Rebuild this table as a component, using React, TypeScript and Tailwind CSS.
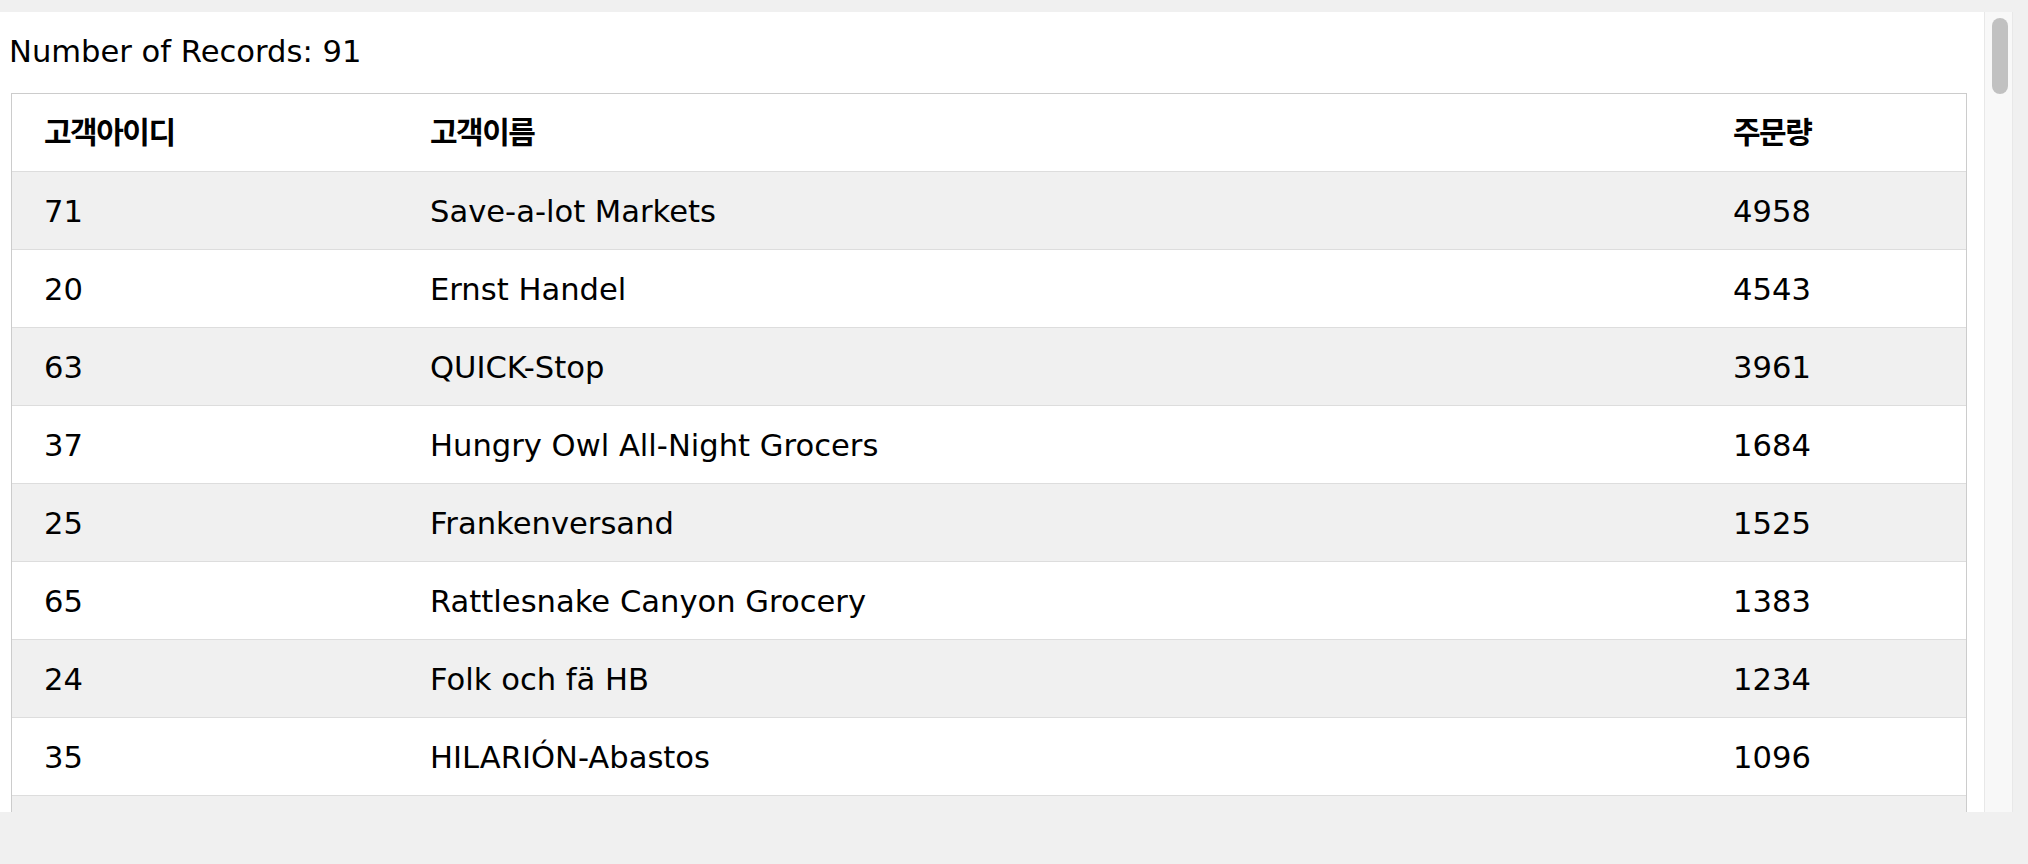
const rows = [
  { id: "71", name: "Save-a-lot Markets", qty: "4958" },
  { id: "20", name: "Ernst Handel", qty: "4543" },
  { id: "63", name: "QUICK-Stop", qty: "3961" },
  { id: "37", name: "Hungry Owl All-Night Grocers", qty: "1684" },
  { id: "25", name: "Frankenversand", qty: "1525" },
  { id: "65", name: "Rattlesnake Canyon Grocery", qty: "1383" },
  { id: "24", name: "Folk och fä HB", qty: "1234" },
  { id: "35", name: "HILARIÓN-Abastos", qty: "1096" },
];

export default function App() {
  return (
    <div
      className="min-h-screen bg-[#f0f0f0] pt-[12px] pr-[15px] text-black"
      style={{ fontFamily: '"DejaVu Sans", "Noto Sans CJK KR", sans-serif' }}
    >
      <div className="flex h-[800px] bg-white">
        {/* Content */}
        <div className="flex-1 overflow-hidden">
          <p className="ml-[9px] mt-[22px] text-[30.6px] leading-[35px]">Number of Records: 91</p>

          <div className="ml-[11px] mr-[17px] mt-[24px] border border-[#cccccc]">
            {/* Header */}
            <div className="grid h-[78px] grid-cols-[386px_1303px_1fr] border-b border-[#dddddd] bg-white">
              <div className="flex items-center pl-[32px] text-[30px] font-bold tracking-[-1.5px]">고객아이디</div>
              <div className="flex items-center pl-[32px] text-[30px] font-bold tracking-[-1.5px]">고객이름</div>
              <div className="flex items-center pl-[32px] text-[30px] font-bold tracking-[-1.5px]">주문량</div>
            </div>

            {rows.map((r, i) => (
              <div
                key={r.id}
                className={
                  i % 2 === 0
                    ? "grid h-[78px] grid-cols-[386px_1303px_1fr] border-b border-[#dddddd] bg-[#f0f0f0]"
                    : "grid h-[78px] grid-cols-[386px_1303px_1fr] border-b border-[#dddddd] bg-white"
                }
              >
                <div className="flex items-center pl-[32px] pt-[2px] text-[30.6px]">{r.id}</div>
                <div className="flex items-center pl-[32px] pt-[2px] text-[30.6px]">{r.name}</div>
                <div className="flex items-center pl-[32px] pt-[2px] text-[30.6px]">{r.qty}</div>
              </div>
            ))}
            {/* next row, cut off by the panel */}
            <div className="h-[78px] bg-[#f0f0f0]" />
          </div>
        </div>

        {/* Scrollbar */}
        <div className="w-[29px] border-x border-[#e8e8e8] bg-[#f8f8f8] pl-[7px] pt-[6px]">
          <div className="h-[76px] w-[16px] rounded-full bg-[#c1c1c1]" />
        </div>
      </div>
    </div>
  );
}
